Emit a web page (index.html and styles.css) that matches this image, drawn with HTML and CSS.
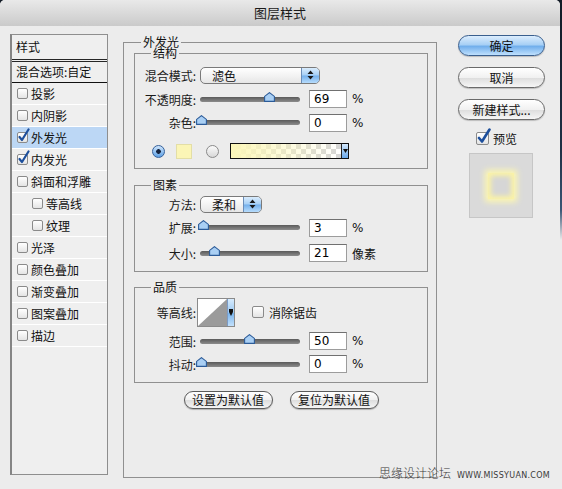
FILE: index.html
```html
<!DOCTYPE html>
<html lang="zh-CN">
<head>
<meta charset="utf-8">
<title>图层样式</title>
<link rel="stylesheet" href="styles.css">
</head>
<body>
<div class="win">
  <div class="titlebar">图层样式</div>
  <div class="main">
    <div class="styles-list">
      <div class="ls-head">样式</div>
      <div class="ls-blend">混合选项:自定</div>
      <div class="ls-item"><span class="cb"></span>投影</div>
      <div class="ls-item"><span class="cb"></span>内阴影</div>
      <div class="ls-item on"><span class="cb"><svg width="14" height="15" viewBox="0 0 14 15"><path d="M2.5 9 L5 12 L11.5 1.5" fill="none" stroke="#1d4f9c" stroke-width="2.2" stroke-linecap="round" stroke-linejoin="round"/></svg></span>外发光</div>
      <div class="ls-item"><span class="cb"><svg width="14" height="15" viewBox="0 0 14 15"><path d="M2.5 9 L5 12 L11.5 1.5" fill="none" stroke="#1d4f9c" stroke-width="2.2" stroke-linecap="round" stroke-linejoin="round"/></svg></span>内发光</div>
      <div class="ls-item"><span class="cb"></span>斜面和浮雕</div>
      <div class="ls-item sub"><span class="cb"></span>等高线</div>
      <div class="ls-item sub"><span class="cb"></span>纹理</div>
      <div class="ls-item"><span class="cb"></span>光泽</div>
      <div class="ls-item"><span class="cb"></span>颜色叠加</div>
      <div class="ls-item"><span class="cb"></span>渐变叠加</div>
      <div class="ls-item"><span class="cb"></span>图案叠加</div>
      <div class="ls-item"><span class="cb"></span>描边</div>
    </div>

    <fieldset class="grp-outer">
      <legend>外发光</legend>

      <fieldset class="grp grp-struct">
        <legend>结构</legend>
        <div class="row h24 first">
          <span class="lbl">混合模式:</span>
          <div class="select sel-blend"><span class="sel-text">滤色</span><span class="sel-arrow"><svg width="7" height="10" viewBox="0 0 7 10"><path d="M3.5 0.5 L6.5 4 L0.5 4 Z M0.5 6 L6.5 6 L3.5 9.5 Z" fill="#1a1a1a"/></svg></span></div>
        </div>
        <div class="row h24">
          <span class="lbl">不透明度:</span>
          <div class="slider"><span class="thumb" style="left:64px"><svg width="11" height="10" viewBox="0 0 11 10"><path d="M5.5 0.6 L10.4 4.4 L10.4 9.4 L0.6 9.4 L0.6 4.4 Z" fill="#a9cff4" stroke="#2c5b98" stroke-width="1.1"/></svg></span></div>
          <span class="num">69</span><span class="unit">%</span>
        </div>
        <div class="row h23">
          <span class="lbl">杂色:</span>
          <div class="slider"><span class="thumb" style="left:-4px"><svg width="11" height="10" viewBox="0 0 11 10"><path d="M5.5 0.6 L10.4 4.4 L10.4 9.4 L0.6 9.4 L0.6 4.4 Z" fill="#a9cff4" stroke="#2c5b98" stroke-width="1.1"/></svg></span></div>
          <span class="num">0</span><span class="unit">%</span>
        </div>
        <div class="row h34">
          <span class="radio on"></span>
          <span class="swatch"></span>
          <span class="radio off"></span>
          <div class="grad"><span class="grad-fill"></span><span class="grad-arrow"><svg width="5" height="4" viewBox="0 0 5 4"><path d="M0 0 L5 0 L2.5 4 Z" fill="#111"/></svg></span></div>
        </div>
      </fieldset>

      <fieldset class="grp grp-elem">
        <legend>图素</legend>
        <div class="row h24">
          <span class="lbl">方法:</span>
          <div class="select sel-method"><span class="sel-text">柔和</span><span class="sel-arrow"><svg width="7" height="10" viewBox="0 0 7 10"><path d="M3.5 0.5 L6.5 4 L0.5 4 Z M0.5 6 L6.5 6 L3.5 9.5 Z" fill="#1a1a1a"/></svg></span></div>
        </div>
        <div class="row h23">
          <span class="lbl">扩展:</span>
          <div class="slider"><span class="thumb" style="left:-2px"><svg width="11" height="10" viewBox="0 0 11 10"><path d="M5.5 0.6 L10.4 4.4 L10.4 9.4 L0.6 9.4 L0.6 4.4 Z" fill="#a9cff4" stroke="#2c5b98" stroke-width="1.1"/></svg></span></div>
          <span class="num">3</span><span class="unit">%</span>
        </div>
        <div class="row h28">
          <span class="lbl">大小:</span>
          <div class="slider"><span class="thumb" style="left:9px"><svg width="11" height="10" viewBox="0 0 11 10"><path d="M5.5 0.6 L10.4 4.4 L10.4 9.4 L0.6 9.4 L0.6 4.4 Z" fill="#a9cff4" stroke="#2c5b98" stroke-width="1.1"/></svg></span></div>
          <span class="num">21</span><span class="unit">像素</span>
        </div>
      </fieldset>

      <fieldset class="grp grp-qual">
        <legend>品质</legend>
        <div class="row h36">
          <span class="lbl">等高线:</span>
          <div class="contour"><svg class="contour-graph" width="29" height="27" viewBox="0 0 29 27"><path d="M0 27 L29 0 L29 27 Z" fill="#9b9b9b"/></svg><span class="contour-arrow"><svg width="4" height="7" viewBox="0 0 4 7"><path d="M0 0 L4 0 L4 3 L2 7 L0 3 Z" fill="#111"/></svg></span></div>
          <span class="cb aa"></span><span class="aa-text">消除锯齿</span>
        </div>
        <div class="row h22">
          <span class="lbl">范围:</span>
          <div class="slider"><span class="thumb" style="left:44px"><svg width="11" height="10" viewBox="0 0 11 10"><path d="M5.5 0.6 L10.4 4.4 L10.4 9.4 L0.6 9.4 L0.6 4.4 Z" fill="#a9cff4" stroke="#2c5b98" stroke-width="1.1"/></svg></span></div>
          <span class="num">50</span><span class="unit">%</span>
        </div>
        <div class="row h24">
          <span class="lbl">抖动:</span>
          <div class="slider"><span class="thumb" style="left:-4px"><svg width="11" height="10" viewBox="0 0 11 10"><path d="M5.5 0.6 L10.4 4.4 L10.4 9.4 L0.6 9.4 L0.6 4.4 Z" fill="#a9cff4" stroke="#2c5b98" stroke-width="1.1"/></svg></span></div>
          <span class="num">0</span><span class="unit">%</span>
        </div>
      </fieldset>

      <div class="btn-row">
        <span class="pill-sm">设置为默认值</span>
        <span class="pill-sm">复位为默认值</span>
      </div>
    </fieldset>

    <div class="side">
      <span class="pill default">确定</span>
      <span class="pill">取消</span>
      <span class="pill">新建样式...</span>
      <div class="preview-row"><span class="cb big"><svg width="16" height="17" viewBox="0 0 16 17"><path d="M3 10 L6 13.5 L13.5 1.5" fill="none" stroke="#1d4f9c" stroke-width="2.6" stroke-linecap="round" stroke-linejoin="round"/></svg></span><span class="pv-text">预览</span></div>
      <div class="preview"><span class="glow"></span></div>
    </div>
  </div>
  <div class="wm"><span class="wm-cn">思缘设计论坛</span><span class="wm-en">WWW.MISSYUAN.COM</span></div>
</div>
</body>
</html>
```

FILE: styles.css
```css
* { box-sizing: border-box; }
html, body { margin: 0; padding: 0; }
body {
  width: 562px;
  height: 489px;
  overflow: hidden;
  background: linear-gradient(to bottom, #121a25 0, #1f3045 150px, #3b5675 210px, #ececec 240px);
  font-family: "Noto Sans CJK SC", "Noto Sans", sans-serif;
  font-size: 12px;
  color: #111;
}
.win {
  position: relative;
  width: 560px;
  height: 489px;
  background: #ececec;
  border-radius: 5px 5px 0 0;
}
.titlebar {
  height: 26px;
  line-height: 26px;
  text-align: center;
  font-size: 13px;
  color: #1a1a1a;
  background: linear-gradient(to bottom, #e9e9e9, #cacaca);
  border-radius: 5px 5px 0 0;
}
.main {
  display: flex;
  align-items: flex-start;
  padding-top: 8px;
}

/* left list */
.styles-list {
  margin-left: 10px;
  width: 98px;
  height: 441px;
  flex: none;
  border: 1px solid #8e8e8e;
  border-left: 2px solid #858585;
  background: #efefef;
}
.ls-head {
  height: 27px;
  line-height: 23px;
  padding-left: 4px;
  border-bottom: 3px double #262626;
}
.ls-blend {
  height: 21px;
  line-height: 20px;
  padding-left: 4px;
  border-bottom: 1px solid #111;
}
.ls-item {
  height: 22px;
  display: flex;
  align-items: center;
  gap: 3px;
  padding-left: 5px;
  border-bottom: 1px solid #fff;
}
.ls-item.sub { padding-left: 20px; }
.ls-item.on { background: #bcd7f5; }

.cb {
  position: relative;
  width: 11px;
  height: 11px;
  flex: none;
  border: 1px solid #8a8a8a;
  border-radius: 2px;
  background: linear-gradient(#ffffff, #e4e4e4);
}
.cb svg { position: absolute; left: -1px; top: -5px; }
.cb.big { width: 13px; height: 13px; }
.cb.big svg { left: -1px; top: -5px; }

/* fieldsets */
fieldset { min-width: 0; }
legend {
  padding: 0 2px;
  line-height: 10px;
  font-size: 12px;
}
.grp-outer {
  margin: 3px 0 0 15px;
  width: 314px;
  height: 441px;
  flex: none;
  border: 1px solid #909090;
  padding: 0 8px 0 10px;
}
.grp-outer > legend { margin-left: 7px; }
.grp {
  margin: 0;
  width: 294px;
  border: 1px solid #909090;
  padding: 2px 0 0 0;
}
.grp > legend { margin-left: 16px; }
.grp-struct { margin-top: 1px; }
.grp-elem { margin-top: 11px; padding-bottom: 4px; }
.grp-qual { margin-top: 10px; padding-bottom: 6px; }

.row { display: flex; align-items: center; }
.first { margin-top: 3px; }
.h22 { height: 22px; }
.h23 { height: 23px; }
.h24 { height: 24px; }
.h28 { height: 28px; }
.h34 { height: 34px; }
.h36 { height: 36px; }
.lbl {
  width: 61px;
  flex: none;
  text-align: right;
  color: #1a1a1a;
}

/* select */
.select {
  margin-left: 4px;
  height: 17px;
  flex: none;
  display: flex;
  align-items: stretch;
  border: 1px solid #7a7a7a;
  border-radius: 5px;
  overflow: hidden;
  background: linear-gradient(#ffffff, #f3f3f3 50%, #e6e6e6);
}
.sel-blend { width: 120px; }
.sel-method { width: 62px; }
.sel-text {
  flex: 1;
  padding-left: 11px;
  line-height: 15px;
}
.sel-arrow {
  width: 18px;
  display: flex;
  align-items: center;
  justify-content: center;
  border-left: 1px solid #6b8db8;
  background: linear-gradient(#d9ecfd, #a6cff5 48%, #74b0ec 52%, #b7dcfc);
}

/* slider */
.slider {
  position: relative;
  margin-left: 4px;
  width: 100px;
  height: 5px;
  flex: none;
  border-radius: 3px;
  background: linear-gradient(#5a5a5a, #8c8c8c);
}
.thumb {
  position: absolute;
  top: -5px;
  width: 11px;
  height: 10px;
}
.thumb svg { display: block; }

.num {
  margin-left: 9px;
  width: 38px;
  height: 18px;
  flex: none;
  padding-left: 4px;
  background: #fff;
  border: 1px solid #9c9c9c;
  border-top-color: #707070;
  font-family: "DejaVu Sans", "Liberation Sans", sans-serif;
  font-size: 12px;
  line-height: 16px;
  color: #000;
}
.unit {
  margin-left: 5px;
  font-family: "DejaVu Sans", "Noto Sans CJK SC", sans-serif;
  font-size: 12px;
}

/* color row */
.radio {
  width: 13px;
  height: 13px;
  flex: none;
  border-radius: 50%;
}
.radio.on {
  margin-left: 17px;
  border: 1px solid #35609a;
  background: radial-gradient(circle, #14233f 0 2px, rgba(0,0,0,0) 2.6px), linear-gradient(#cfe6fc, #5d9fe4);
}
.radio.off {
  margin-left: 14px;
  border: 1px solid #8a8a8a;
  background: linear-gradient(#fbfbfb, #d8d8d8);
}
.swatch {
  margin-left: 11px;
  width: 16px;
  height: 15px;
  flex: none;
  background: #fbf5b6;
  border: 1px solid #e3dea6;
}
.grad {
  margin-left: 11px;
  width: 119px;
  height: 16px;
  flex: none;
  display: flex;
  border: 1px solid #111;
}
.grad-fill {
  flex: 1;
  background:
    linear-gradient(to right, #fcf7b9 0%, rgba(252, 247, 185, 0.6) 40%, rgba(252, 247, 185, 0) 100%),
    repeating-conic-gradient(#d6d6d6 0 25%, #ffffff 0 50%) 0 0 / 10px 10px;
}
.grad-arrow {
  width: 7px;
  display: flex;
  align-items: center;
  justify-content: center;
  border-left: 1px solid #222;
  background: linear-gradient(#d3e8fc, #6aa8e8);
}

/* contour */
.contour {
  margin-left: 1px;
  width: 38px;
  height: 29px;
  flex: none;
  display: flex;
  border: 1px solid #8a8a8a;
  background: #fff;
}
.contour-graph { display: block; }
.contour-arrow {
  flex: 1;
  display: flex;
  align-items: center;
  justify-content: center;
  border-left: 1px solid #7d9bc4;
  background: linear-gradient(#d7ebfd, #9ccaf3 50%, #78b3ec 52%, #c3e1fc);
}
.cb.aa { margin-left: 17px; width: 12px; height: 12px; }
.aa-text { margin-left: 5px; }

/* bottom buttons */
.btn-row {
  display: flex;
  justify-content: center;
  gap: 17px;
  margin-top: 8px;
}
.pill-sm {
  width: 89px;
  height: 18px;
  border: 1px solid #5a5a5a;
  border-radius: 9px;
  background: linear-gradient(#ffffff, #f0f0f0 50%, #dedede 52%, #f5f5f5);
  box-shadow: 0 1px 1px rgba(0,0,0,0.25);
  text-align: center;
  line-height: 16px;
}

/* side */
.side {
  margin-left: 21px;
  margin-top: 1px;
  width: 87px;
  flex: none;
  display: flex;
  flex-direction: column;
}
.pill {
  height: 21px;
  border: 1px solid #6a6a6a;
  border-radius: 11px;
  background: linear-gradient(#ffffff, #f1f1f1 50%, #dddddd 52%, #f6f6f6);
  box-shadow: 0 1px 1px rgba(0,0,0,0.2);
  text-align: center;
  line-height: 19px;
}
.pill + .pill { margin-top: 11px; }
.pill.default {
  border-color: #3a5f8e;
  background: linear-gradient(#dcedfd, #a8d0f5 45%, #72afec 55%, #bfe0fd);
}
.preview-row {
  margin-top: 11px;
  height: 14px;
  display: flex;
  align-items: center;
  padding-left: 18px;
}
.pv-text { margin-left: 4px; }
.preview {
  margin-top: 8px;
  margin-left: 11px;
  width: 64px;
  height: 65px;
  display: flex;
  align-items: center;
  justify-content: center;
  background: #dadada;
  border: 1px solid #c6c6c6;
}
.glow {
  width: 26px;
  height: 26px;
  background: #d6d6d6;
  box-shadow: 0 0 6px 3px #fdf7b0, inset 0 0 5px 3px #fbf3a6;
}

/* watermark */
.wm {
  position: absolute;
  right: 10px;
  bottom: 8px;
  display: flex;
  align-items: baseline;
  gap: 6px;
  color: #3a3a3a;
}
.wm-cn {
  font-size: 12px;
  font-weight: 300;
}
.wm-en {
  font-family: "DejaVu Sans", sans-serif;
  font-size: 8px;
  letter-spacing: 0.3px;
}
```
